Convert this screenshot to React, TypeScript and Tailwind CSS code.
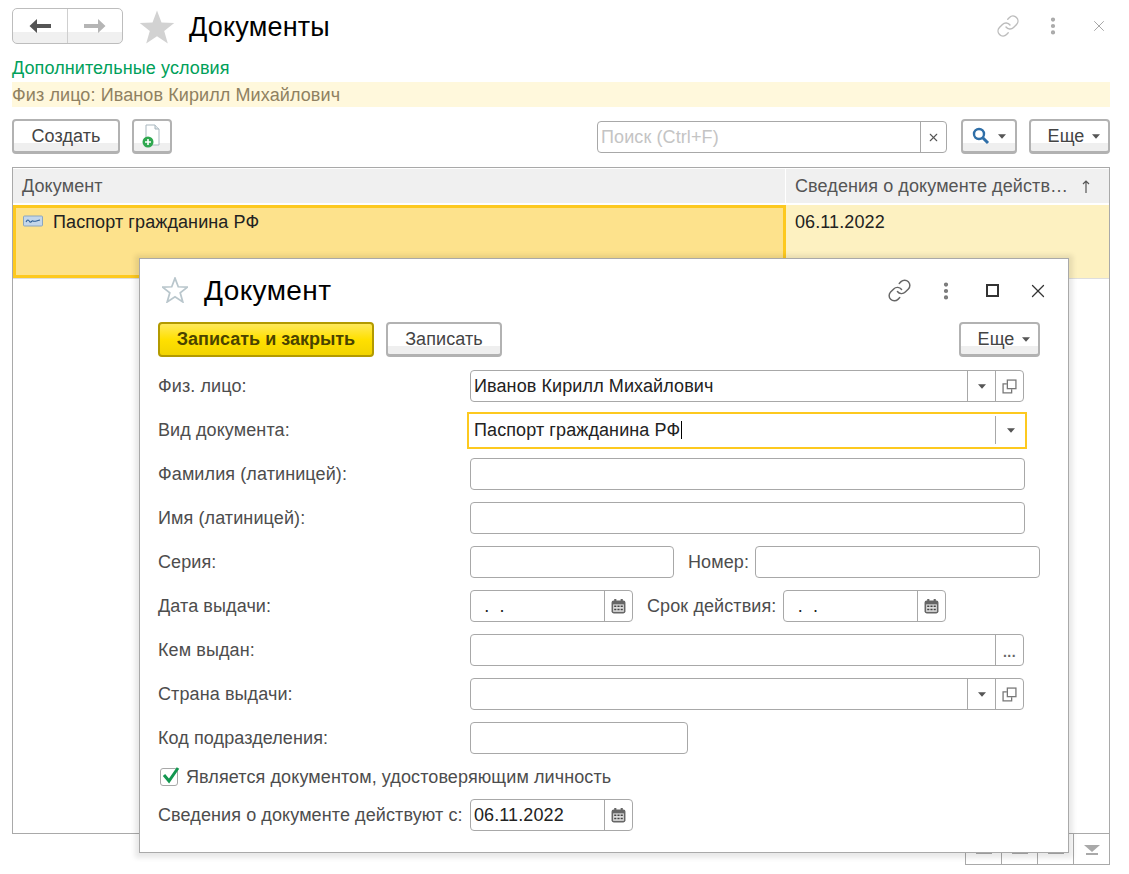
import React from 'react';
import { Link, MoreVertical, X } from 'lucide-react';

const Caret = ({ className = 'text-[#555]', w = 9 }: { className?: string; w?: number }) => (
  <svg width={w} height="5" viewBox="0 0 9 5" className={className}>
    <polygon points="0,0 9,0 4.5,5" fill="currentColor" />
  </svg>
);

const Star = ({ size, outline }: { size: number; outline?: boolean }) => (
  <svg width={size} height={size} viewBox="0 0 24 24">
    <polygon
      points="12,1 15,9 23.5,9.3 16.8,14.6 19.2,23 12,18.2 4.8,23 7.2,14.6 0.5,9.3 9,9"
      fill={outline ? '#fff' : '#d2d2d2'}
      stroke={outline ? '#b9c6cc' : 'none'}
      strokeWidth={outline ? 1.6 : 0}
    />
  </svg>
);

const Calendar = () => (
  <svg width="15" height="15" viewBox="0 0 14 14">
    <rect x="0.5" y="1.5" width="13" height="12" rx="2" fill="#666" />
    <rect x="3" y="0" width="2" height="3" fill="#666" />
    <rect x="9" y="0" width="2" height="3" fill="#666" />
    <rect x="2" y="5" width="10" height="7" fill="#ddd" />
    <path d="M3 6h2v1.4H3zM6 6h2v1.4H6zM9 6h2v1.4H9zM3 9h2v1.4H3zM6 9h2v1.4H6zM9 9h2v1.4H9z" fill="#444" />
  </svg>
);

const CopyIcon = () => (
  <svg width="15" height="15" viewBox="0 0 14 14" fill="none" stroke="#777" strokeWidth="1.2">
    <path d="M4.5 4.5H1v8.5h8V9.5" />
    <rect x="5" y="1" width="8" height="8" fill="#fff" />
  </svg>
);

const Btn = ({ children, className = '' }: { children: React.ReactNode; className?: string }) => (
  <div className={`relative flex items-center justify-center rounded-[4px] border-2 border-[#b2b2b2] border-b-[3px] bg-[linear-gradient(#fff_0,#fff_72%,#efefef_72%,#efefef_100%)] text-[18px] tracking-[0.1px] text-[#444] ${className}`}>
    {children}
  </div>
);

const Field = ({ width, text, parts = [] }: { width: string; text?: string; parts?: ('caret' | 'copy' | 'cal' | 'dots')[] }) => (
  <div className={`flex h-[32px] rounded-[4px] border border-[#a8a8a8] bg-white ${width}`}>
    <div className="min-w-0 flex-1 whitespace-pre pl-[3px] text-[18px] leading-[30px] tracking-[0.1px] text-[#222]">{text}</div>
    {parts.map((p, i) => (
      <div key={i} className="flex w-[28px] items-center justify-center border-l border-[#a8a8a8]">
        {p === 'caret' && <Caret w={8} />}
        {p === 'copy' && <CopyIcon />}
        {p === 'cal' && <Calendar />}
        {p === 'dots' && <span className="mt-[4px] text-[14px] font-bold leading-none tracking-[0.5px] text-[#666]">...</span>}
      </div>
    ))}
  </div>
);

const Row = ({ label, children }: { label: string; children: React.ReactNode }) => (
  <div className="flex h-[44px] items-center">
    <div className="w-[312px] shrink-0 text-[18px] tracking-[0.1px] text-[#4d4d4d]">{label}</div>
    {children}
  </div>
);

export default function App() {
  return (
    <div className="relative flex h-[874px] w-[1129px] flex-col overflow-hidden bg-white pl-[12px] pr-[19px] font-['Liberation_Sans',Arial,sans-serif]">
      {/* шапка списка */}
      <div className="flex h-[44px] shrink-0 items-end">
        <div className="flex h-[36px] w-[111px] rounded-[5px] border border-[#bdbdbd] bg-[linear-gradient(#fff_0,#fff_68%,#f0f0f0_68%,#f0f0f0_100%)]">
          <div className="flex w-[55px] items-center justify-center border-r border-[#cfcfcf]">
            <svg width="22" height="14" viewBox="0 0 22 14"><path d="M8 0 L0.5 7 L8 14 L8 9 L22 9 L22 5 L8 5 Z" fill="#555" /></svg>
          </div>
          <div className="flex flex-1 items-center justify-center">
            <svg width="22" height="14" viewBox="0 0 22 14"><path d="M14 0 L21.5 7 L14 14 L14 9 L0 9 L0 5 L14 5 Z" fill="#b5b5b5" /></svg>
          </div>
        </div>
        <div className="ml-[16px] mb-[-1px]"><Star size={36} /></div>
        <div className="ml-[14px] flex-1 self-end text-[27px] leading-[34px] tracking-[0.2px] text-black">Документы</div>
        <div className="mb-[6px] flex items-center">
          <Link size={24} strokeWidth={1.4} className="text-[#bcbcbc]" />
          <MoreVertical size={22} strokeWidth={2.6} className="ml-[22px] text-[#a8a8a8]" />
          <X size={18} strokeWidth={1.3} className="ml-[26px] mr-[2px] text-[#a5a5a5]" />
        </div>
      </div>

      <div className="mt-[14px] text-[18px] leading-[20px] tracking-[0.1px] text-[#00a05a]">Дополнительные условия</div>
      <div className="mt-[4px] h-[25px] bg-[#fff8dc] text-[18px] leading-[26px] tracking-[0.1px] text-[#8f8161]">Физ лицо: Иванов Кирилл Михайлович</div>

      {/* командная панель */}
      <div className="mt-[12px] flex h-[35px] shrink-0 items-start">
        <Btn className="h-[35px] w-[108px]">Создать</Btn>
        <Btn className="ml-[12px] h-[35px] w-[40px]">
          <svg className="ml-[-3px]" width="20" height="24" viewBox="0 0 20 24">
            <path d="M5 1h9l4 4v16H5z" fill="#fff" stroke="#a9b7bf" />
            <path d="M14 1v4h4" fill="#dfe6ea" stroke="#a9b7bf" />
            <circle cx="7" cy="18" r="5.5" fill="#2fa84f" />
            <path d="M7 15v6M4 18h6" stroke="#fff" strokeWidth="1.6" />
          </svg>
        </Btn>
        <div className="ml-[425px] mt-[2px] flex h-[32px] w-[350px] rounded-[4px] border border-[#a8a8a8]">
          <div className="flex-1 pl-[3px] text-[18px] leading-[30px] tracking-[0.1px] text-[#c4c4c4]">Поиск (Ctrl+F)</div>
          <div className="flex w-[26px] items-center justify-center border-l border-[#a8a8a8]">
            <X size={13} strokeWidth={2} className="text-[#555]" />
          </div>
        </div>
        <Btn className="ml-[14px] h-[35px] w-[56px] gap-[8px]">
          <svg width="18" height="18" viewBox="0 0 18 18" fill="none">
            <circle cx="7" cy="7" r="5" stroke="#2f6fa8" strokeWidth="2.4" />
            <path d="M11 11l5 5" stroke="#2f6fa8" strokeWidth="3" />
          </svg>
          <Caret w={8} />
        </Btn>
        <Btn className="ml-[12px] h-[35px] w-[81px] gap-[8px] pl-[9px]">
          Еще
          <Caret w={8} />
        </Btn>
      </div>

      {/* таблица */}
      <div className="mt-[13px] flex h-[667px] shrink-0 flex-col border border-[#a9a9a9] bg-white pt-px">
        <div className="flex h-[34px] shrink-0">
          <div className="flex w-[772px] items-center bg-[#f0f0f0] pl-[9px] text-[18px] tracking-[0.1px] text-[#555]">Документ</div>
          <div className="ml-px flex flex-1 items-center justify-between bg-[#f0f0f0] pl-[9px] pr-[19px] text-[18px] tracking-[0.1px] text-[#555]">
            <span>Сведения о документе действ…</span>
            <svg width="8" height="13" viewBox="0 0 8 13" fill="none" stroke="#555" strokeWidth="1.2"><path d="M4 13V1M1 4l3-3 3 3" /></svg>
          </div>
        </div>
        <div className="mt-[2px] flex h-[74px] shrink-0 border-b border-[#dedede]">
          <div className="flex w-[773px] items-start border-[3px] border-[#fdc91f] bg-[#fde28c] pl-[7px] pt-[4px] text-[18px] leading-[20px] tracking-[0.1px] text-[#222]">
            <svg className="mt-[3px]" width="20" height="12" viewBox="0 0 20 12">
              <rect x="0.5" y="1" width="19" height="10" rx="1" fill="#c3d6ea" stroke="#8ba6bf" />
              <path d="M3 7c2-4 3-1 4 0s2-2 3-1 3 0 7-1" fill="none" stroke="#2e5f96" strokeWidth="1.1" />
            </svg>
            <span className="ml-[10px]">Паспорт гражданина РФ</span>
          </div>
          <div className="flex-1 bg-[#fdf1c1] pl-[9px] pt-[7px] text-[18px] leading-[20px] tracking-[0.1px] text-[#222]">06.11.2022</div>
        </div>
      </div>

      {/* навигация таблицы, почти закрыта окном */}
      <div className="flex h-[31px] shrink-0 justify-end">
        {[0, 1, 2].map((i) => (
          <div key={i} className="flex w-[36px] items-end justify-center border-b border-l border-[#a9a9a9] pb-[10px]">
            <div className="h-[2px] w-[16px] bg-[#aaa]" />
          </div>
        ))}
        <div className="flex w-[37px] flex-col items-center justify-end border-x border-b border-[#a9a9a9] pb-[9px]">
          <svg width="16" height="10" viewBox="0 0 16 10">
            <polygon points="0,0 16,0 8,7" fill="#a9a9a9" />
            <rect x="2" y="8" width="12" height="2" fill="#a9a9a9" />
          </svg>
        </div>
      </div>

      {/* модальное окно поверх списка */}
      <div className="absolute left-[139px] top-[258px] flex h-[595px] w-[930px] flex-col border border-[#a9a9a9] bg-white pl-[18px] pr-[28px] shadow-[0_1px_5px_4px_rgba(0,0,0,0.09)]">
        <div className="flex h-[63px] shrink-0 items-center">
          <div className="ml-[4px] mt-[-2px]"><Star size={26} outline /></div>
          <div className="ml-[16px] flex-1 pt-[1px] text-[28px] leading-[36px] tracking-[0.4px] text-black">Документ</div>
          <Link size={25} strokeWidth={1.4} className="text-[#666]" />
          <MoreVertical size={22} strokeWidth={2.6} className="ml-[23px] text-[#777]" />
          <div className="ml-[29px] h-[13px] w-[13px] border-2 border-[#333]" />
          <X size={22} strokeWidth={1.4} className="ml-[28px] mr-[-9px] text-[#333]" />
        </div>

        <div className="flex h-[35px] shrink-0">
          <div className="flex h-[35px] w-[216px] items-center justify-center rounded-[4px] border-2 border-[#b39a00] bg-[linear-gradient(#ffe95a_0,#ffe000_50%,#f2d400_100%)] text-[18px] font-bold text-[#4a4300]">Записать и закрыть</div>
          <Btn className="ml-[12px] h-[35px] w-[116px]">Записать</Btn>
          <Btn className="ml-auto h-[35px] w-[81px] gap-[8px] pl-[9px]">
            Еще
            <Caret w={8} />
          </Btn>
        </div>

        <div className="mt-[7px] flex flex-col">
          <Row label="Физ. лицо:">
            <Field width="w-[554px]" text="Иванов Кирилл Михайлович" parts={['caret', 'copy']} />
          </Row>
          <Row label="Вид документа:">
            <div className="ml-[-3px] flex h-[37px] w-[560px] items-center border-2 border-[#fdc91f] bg-white">
              <div className="flex-1 pl-[5px] text-[18px] leading-[24px] tracking-[0.1px] text-[#222]">
                Паспорт гражданина РФ<span className="ml-px inline-block h-[18px] w-px translate-y-[3px] bg-black" />
              </div>
              <div className="flex h-[28px] w-[30px] items-center justify-center border-l border-[#a8a8a8]"><Caret w={8} /></div>
            </div>
          </Row>
          <Row label="Фамилия (латиницей):"><Field width="w-[555px]" /></Row>
          <Row label="Имя (латиницей):"><Field width="w-[555px]" /></Row>
          <Row label="Серия:">
            <Field width="w-[204px]" />
            <span className="ml-[14px] mr-[6px] text-[18px] tracking-[0.1px] text-[#4d4d4d]">Номер:</span>
            <Field width="w-[285px]" />
          </Row>
          <Row label="Дата выдачи:">
            <Field width="w-[163px]" text="  .  ." parts={['cal']} />
            <span className="ml-[14px] mr-[7px] text-[18px] tracking-[0.1px] text-[#4d4d4d]">Срок действия:</span>
            <Field width="w-[163px]" text="  .  ." parts={['cal']} />
          </Row>
          <Row label="Кем выдан:"><Field width="w-[554px]" parts={['dots']} /></Row>
          <Row label="Страна выдачи:"><Field width="w-[554px]" parts={['caret', 'copy']} /></Row>
          <Row label="Код подразделения:"><Field width="w-[218px]" /></Row>
        </div>

        <div className="mt-[6px] flex h-[22px] items-center">
          <div className="relative ml-[2px] h-[18px] w-[18px] rounded-[3px] border border-[#a8a8a8]">
            <svg className="absolute left-[1px] top-[-3px]" width="18" height="18" viewBox="0 0 18 18">
              <path d="M2 9l5 6L16 2" fill="none" stroke="#12964f" strokeWidth="3" />
            </svg>
          </div>
          <span className="ml-[8px] text-[18px] tracking-[0.1px] text-[#4d4d4d]">Является документом, удостоверяющим личность</span>
        </div>
        <div className="mt-[5px] flex h-[44px] items-center">
          <div className="w-[312px] shrink-0 text-[18px] tracking-[0.1px] text-[#4d4d4d]">Сведения о документе действуют с:</div>
          <Field width="w-[163px]" text="06.11.2022" parts={['cal']} />
        </div>
      </div>
    </div>
  );
}
